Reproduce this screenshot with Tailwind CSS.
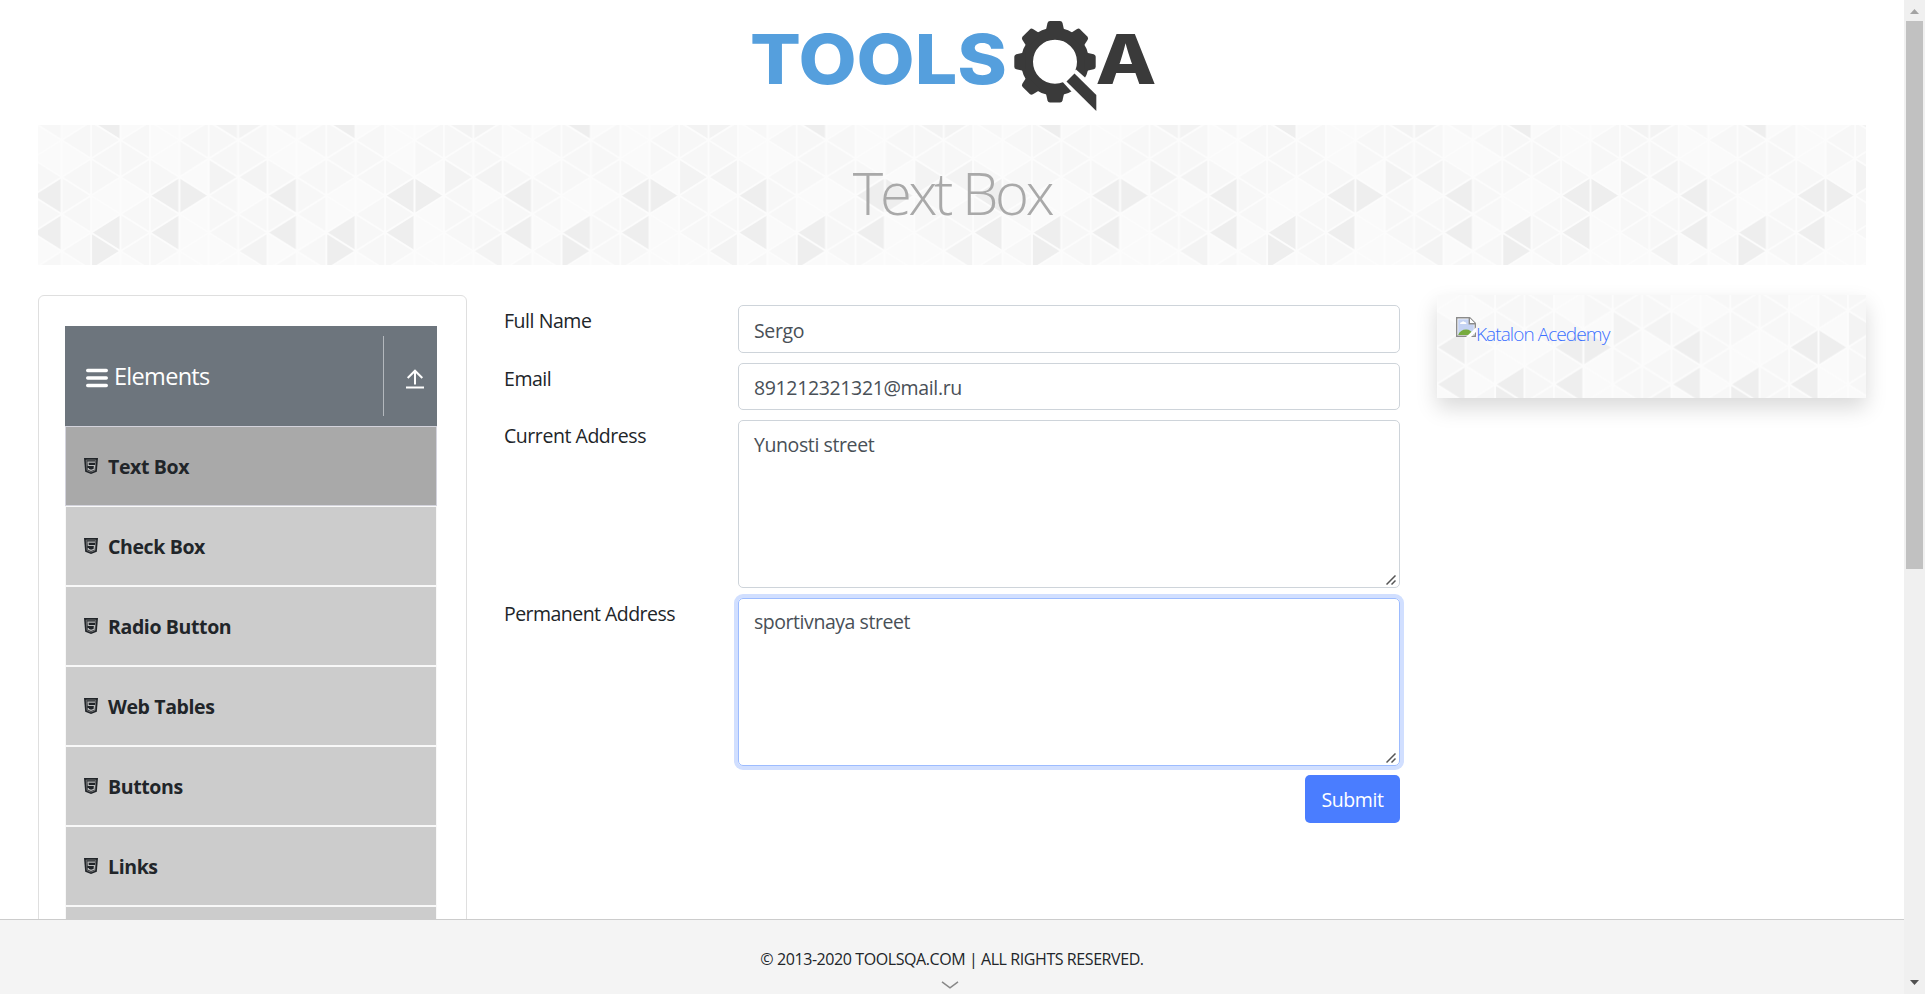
<!DOCTYPE html>
<html lang="en">
<head>
<meta charset="utf-8">
<title>ToolsQA - Text Box</title>
<script src="https://cdn.jsdelivr.net/npm/@tailwindcss/browser@4"></script>
</head>
<body class="flex h-[994px] w-[1925px] overflow-hidden bg-white font-['Open_Sans','Noto_Sans',sans-serif] text-[19.5px] leading-[30px] tracking-[-0.45px] text-[#212529]">

<svg class="absolute size-0" aria-hidden="true">
  <defs>
    <path id="L" d="M0 0L29.4-18.5V18.5z"/>
    <path id="R" d="M29.4 0L0-18.5V18.5z"/>
    <pattern id="tri" x="-5.7" y="0" width="235.2" height="148" patternUnits="userSpaceOnUse">
      <rect width="235.2" height="148" fill="#fafafa"/>
      <g fill="#f7f7f7">
        <use href="#L" x="0" y="-3.4"/><use href="#R" x="0" y="52"/><use href="#R" x="0" y="89"/><use href="#L" x="0" y="144.6"/>
        <use href="#L" x="29.4" y="15"/><use href="#L" x="29.4" y="52"/><use href="#R" x="29.4" y="70.6"/><use href="#L" x="29.4" y="89"/><use href="#L" x="29.4" y="126"/>
        <use href="#R" x="58.8" y="15"/><use href="#L" x="58.8" y="33.6"/><use href="#R" x="58.8" y="52"/>
        <use href="#L" x="88.2" y="15"/><use href="#R" x="88.2" y="33.6"/><use href="#L" x="88.2" y="52"/><use href="#L" x="88.2" y="89"/><use href="#R" x="88.2" y="107.6"/><use href="#L" x="88.2" y="126"/>
        <use href="#R" x="117.6" y="52"/><use href="#R" x="117.6" y="89"/><use href="#R" x="117.6" y="126"/>
        <use href="#L" x="147" y="15"/><use href="#R" x="147" y="33.6"/>
        <use href="#R" x="176.4" y="15"/><use href="#L" x="176.4" y="33.6"/><use href="#L" x="176.4" y="70.6"/><use href="#R" x="176.4" y="89"/><use href="#L" x="176.4" y="107.6"/>
        <use href="#L" x="205.8" y="15"/><use href="#R" x="205.8" y="33.6"/><use href="#L" x="205.8" y="89"/><use href="#R" x="205.8" y="107.6"/>
      </g>
      <g fill="#f3f3f3">
        <use href="#R" x="176.4" y="52"/><use href="#L" x="205.8" y="52"/><use href="#L" x="205.8" y="126"/><use href="#L" x="176.4" y="-3.4"/><use href="#R" x="205.8" y="-3.4"/>
      </g>
      <g fill="#eeeeee">
        <use href="#L" x="0" y="70.6"/><use href="#L" x="0" y="107.6"/><use href="#L" x="58.8" y="107.6"/><use href="#R" x="58.8" y="126"/><use href="#L" x="117.6" y="70.6"/><use href="#R" x="147" y="70.6"/><use href="#L" x="117.6" y="107.6"/><use href="#L" x="58.8" y="-3.4"/>
      </g>
      <g fill="none" stroke="#fcfcfc" stroke-width="2">
        <path d="M0 0V148M29.4 0V148M58.8 0V148M88.2 0V148M117.6 0V148M147 0V148M176.4 0V148M205.8 0V148M235.2 0V148"/>
        <path d="M0-114.4l235.2 148M0-77.4l235.2 148M0-40.4l235.2 148M0-3.4l235.2 148M0 33.6l235.2 148M0 70.6l235.2 148M0 107.6l235.2 148M0 144.6l235.2 148"/>
        <path d="M0-3.4l235.2-148M0 33.6l235.2-148M0 70.6l235.2-148M0 107.6l235.2-148M0 144.6l235.2-148M0 181.6l235.2-148M0 218.6l235.2-148M0 255.6l235.2-148M0 292.6l235.2-148"/>
      </g>
    </pattern>
    <symbol id="html5" viewBox="0 0 14 16">
      <path d="M0 0h14l-1.2 13.8L7 16l-5.8-2.200z" fill="#212529"/>
      <path d="M2.200 2h9.600l-.9 10.500L7 14l-3.900-1.500z" fill="#212529" stroke="#888" stroke-width=".7"/>
      <path d="M11 4.200H4l.3 3.300h6.200l-.4 3.700L7 12.300l-2.600-1-.1-1.300" fill="none" stroke="#bbb" stroke-width="1.200"/>
    </symbol>
    <symbol id="grip" viewBox="0 0 10 10"><path d="M.5 9.500l9-9M5.500 9.500l4-4" stroke="#555" stroke-width="1.500" fill="none"/></symbol>
  </defs>
</svg>

<div class="flex h-full w-[1904px] flex-col">
  <div class="min-h-0 flex-1 overflow-hidden px-[38px]">
    <header class="flex h-[125px] justify-center pt-[10px]">
      <svg class="h-[110px] w-[430px] translate-x-[3px]" viewBox="0 0 430 110" role="img" aria-label="TOOLSQA">
        <text x="10" y="73.500" font-family="Inter, sans-serif" font-weight="800" font-size="69" letter-spacing="0" textLength="257" lengthAdjust="spacingAndGlyphs" fill="#559fdd">TOOLS</text>
        <g fill="#3a3a3a">
          <circle cx="315" cy="51.700" r="28" fill="none" stroke="#3a3a3a" stroke-width="12"/>
          <g>
            <path id="tooth" d="M305.500 22L307.500 13Q308 11 310 11H320Q322 11 322.500 13L324.500 22z"/>
            <use href="#tooth" transform="rotate(45 315 51.700)"/>
            <use href="#tooth" transform="rotate(90 315 51.700)"/>
            <use href="#tooth" transform="rotate(180 315 51.700)"/>
            <use href="#tooth" transform="rotate(225 315 51.700)"/>
            <use href="#tooth" transform="rotate(270 315 51.700)"/>
            <use href="#tooth" transform="rotate(315 315 51.700)"/>
          </g>
          <path d="M322.700 72L336 59.500L345 67.500L362 84V112L330 80z" fill="#fff"/>
          <path d="M326.500 71.500L334.500 63.500L356.300 85V101z"/>
        </g>
        <text x="355.500" y="73.500" font-family="Inter, sans-serif" font-weight="800" font-size="69" letter-spacing="0" textLength="61" lengthAdjust="spacingAndGlyphs" fill="#3a3a3a">A</text>
      </svg>
    </header>

    <div class="relative flex h-[140px] items-center justify-center">
      <svg class="absolute inset-0 h-full w-full"><rect width="1828" height="140" fill="url(#tri)"/></svg>
      <h1 class="relative -top-[2px] text-[58px] leading-[70px] font-light tracking-[-3.300px] text-[#a9a9a9]">Text Box</h1>
    </div>

    <div class="mt-[30px] flex items-start">
      <aside class="h-[900px] w-[429px] rounded-[6px] border border-[#dfdfdf] px-[26px] pt-[30px]">
        <div class="w-[372px]">
          <div class="flex h-[100px] items-center bg-[#6d757d] pl-[21px] text-[23.500px] tracking-[-0.700px] text-white">
            <svg class="mt-[4px] h-[20px] w-[22px]" viewBox="0 0 22 20" stroke="#fff" stroke-width="3.400" stroke-linecap="round"><path d="M1.700 2.500h18.600M1.700 10h18.600M1.700 17.500h18.600"/></svg>
            <span class="ml-[6px]">Elements</span>
            <div class="ml-auto flex h-[80px] w-[54px] items-center border-l border-[#b3b8bd] pl-[22px]">
              <svg class="mt-[6px] h-[20px] w-[18px]" viewBox="0 0 18 20" fill="none" stroke="#fff" stroke-width="2"><path d="M9 15.500V2M1.700 9L9 1.700 16.300 9M0 18.500h18"/></svg>
            </div>
          </div>
          <ul class="font-bold tracking-[-0.380px]">
            <li class="flex h-[80px] items-center border border-[#d3d3dc] bg-[#a9a9a9] pl-[18px]"><svg class="h-[16px] w-[14px]"><use href="#html5"/></svg><span class="mt-[2px] ml-[10px]">Text Box</span></li>
            <li class="flex h-[80px] items-center border border-[#f8f8f8] bg-[#ccc] pl-[18px]"><svg class="h-[16px] w-[14px]"><use href="#html5"/></svg><span class="mt-[2px] ml-[10px]">Check Box</span></li>
            <li class="flex h-[80px] items-center border border-[#f8f8f8] bg-[#ccc] pl-[18px]"><svg class="h-[16px] w-[14px]"><use href="#html5"/></svg><span class="mt-[2px] ml-[10px]">Radio Button</span></li>
            <li class="flex h-[80px] items-center border border-[#f8f8f8] bg-[#ccc] pl-[18px]"><svg class="h-[16px] w-[14px]"><use href="#html5"/></svg><span class="mt-[2px] ml-[10px]">Web Tables</span></li>
            <li class="flex h-[80px] items-center border border-[#f8f8f8] bg-[#ccc] pl-[18px]"><svg class="h-[16px] w-[14px]"><use href="#html5"/></svg><span class="mt-[2px] ml-[10px]">Buttons</span></li>
            <li class="flex h-[80px] items-center border border-[#f8f8f8] bg-[#ccc] pl-[18px]"><svg class="h-[16px] w-[14px]"><use href="#html5"/></svg><span class="mt-[2px] ml-[10px]">Links</span></li>
            <li class="h-[80px] border border-[#f8f8f8] bg-[#ccc]"></li>
          </ul>
        </div>
      </aside>

      <form class="mt-[10px] ml-[37px] w-[896px]">
        <div class="flex h-[58px]">
          <label class="w-[234px] pt-px">Full Name</label>
          <input value="Sergo" class="h-[48px] flex-1 rounded-[5px] border border-[#ced4da] px-[15px] pt-[2px] tracking-[-0.350px] text-[#495057]">
        </div>
        <div class="flex h-[57px]">
          <label class="w-[234px] pt-px">Email</label>
          <input value="891212321321@mail.ru" class="h-[47px] flex-1 rounded-[5px] border border-[#ced4da] px-[15px] pt-[2px] tracking-[-0.360px] text-[#495057]">
        </div>
        <div class="flex h-[178px]">
          <label class="w-[234px] pt-px">Current Address</label>
          <div class="relative h-[168px] flex-1">
            <textarea class="block h-full w-full resize-none rounded-[5px] border border-[#ced4da] px-[15px] py-[9px] tracking-[-0.400px] text-[#495057]">Yunosti street</textarea>
            <svg class="absolute right-[4px] bottom-[3px] size-[10px]"><use href="#grip"/></svg>
          </div>
        </div>
        <div class="flex h-[177px]">
          <label class="w-[234px] pt-px tracking-[-0.540px]">Permanent Address</label>
          <div class="relative h-[168px] flex-1">
            <textarea class="block h-full w-full resize-none rounded-[5px] border border-[#9dbcff] px-[15px] py-[8px] text-[#495057] shadow-[0_0_0_4px_#d1dfff]">sportivnaya street</textarea>
            <svg class="absolute right-[4px] bottom-[3px] size-[10px]"><use href="#grip"/></svg>
          </div>
        </div>
        <div class="flex justify-end">
          <button type="button" class="h-[48px] w-[95px] rounded-[5px] bg-[#4a7dff] pt-[2px] text-white">Submit</button>
        </div>
      </form>

      <div class="relative ml-[37px] h-[103px] w-[429px] shadow-[0_10px_20px_rgba(0,0,0,0.15)]">
        <svg class="absolute inset-0 h-full w-full"><g transform="translate(5 -18.300)"><rect x="-5" width="434" height="140" fill="url(#tri)"/></g></svg>
        <a class="relative flex pt-[22px] pl-[19px] text-[19px] font-light tracking-[-0.920px] text-[#3a70ff]">
          <svg class="size-[20px]" viewBox="0 0 20 20">
            <path d="M.7.700h13l5.600 5.600v13H.7z" fill="#fff" stroke="#8b8b8b" stroke-width="1.400"/>
            <path d="M2.200 2.200h10.600v5h5V18H2.200z" fill="#c5d3f3"/>
            <path d="M4 7q0-2 2-2 1-1.500 2.500 0 2 0 2 2z" fill="#fff"/>
            <path d="M2.200 18q2-5.500 8-5.500 4.800 0 7.600 5.500z" fill="#77ab3e"/>
            <path d="M13.300.7v6h6" fill="#fff" stroke="#8b8b8b" stroke-width="1.400"/>
            <path d="M10 20L20 10.500V15l-5 5z" fill="#fff"/>
          </svg>
          <span class="mt-[2px]">Katalon Acedemy</span>
        </a>
      </div>
    </div>
  </div>

  <footer class="flex h-[75px] flex-col items-center border-t border-[#ccc] bg-[#f4f4f4] pt-[24px] text-[16px] tracking-[-0.420px]">
    <span>© 2013-2020 TOOLSQA.COM | ALL RIGHTS RESERVED.</span>
    <svg class="mt-[7px] h-[8px] w-[18px] translate-x-[-2px]" viewBox="0 0 18 8" fill="none" stroke="#888" stroke-width="1.500"><path d="M1 .8l8 6 8-6"/></svg>
  </footer>
</div>

<div class="flex h-full w-[21px] flex-col items-center bg-[#f0f0f0]">
  <svg class="h-[21px] w-[21px] shrink-0"><path d="M6 14h9l-4.500-5z" fill="#a3a3a3"/></svg>
  <div class="h-[548px] w-[17px] bg-[#c1c1c1]"></div>
  <svg class="mt-auto h-[21px] w-[21px]"><path d="M6 7h9l-4.500 5z" fill="#505050"/></svg>
</div>
</body>
</html>
